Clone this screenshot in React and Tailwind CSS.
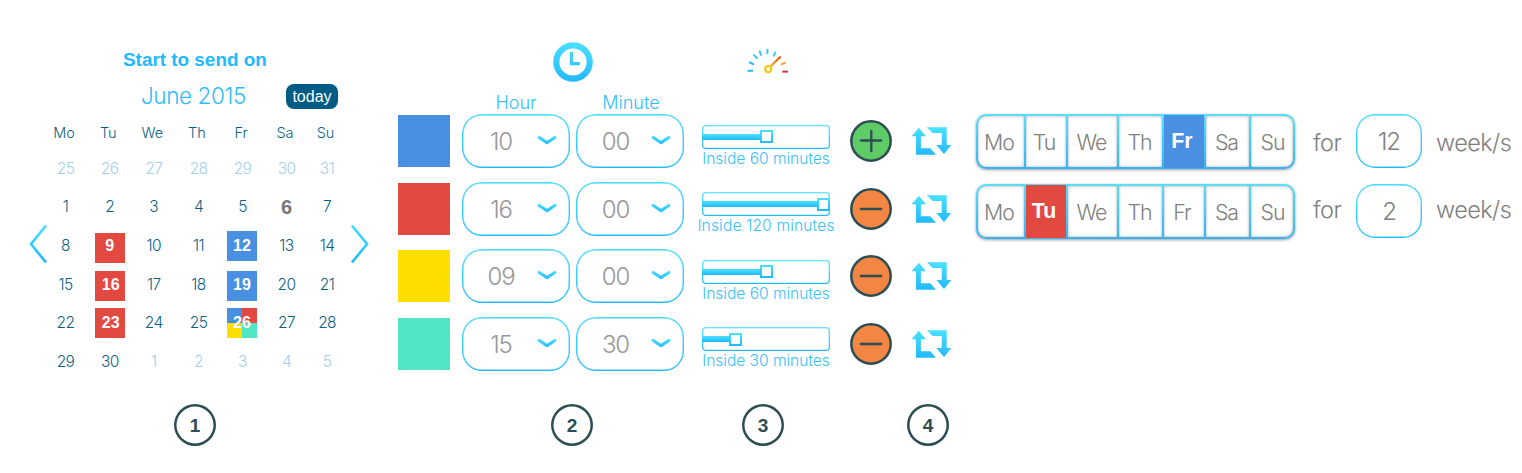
import React from "react";

const light = "font-['Inter','Liberation_Sans',sans-serif] font-light";

const WEEKDAYS = ["Mo", "Tu", "We", "Th", "Fr", "Sa", "Su"];

const DAYS = [
  [25, 26, 27, 28, 29, 30, 31],
  [1, 2, 3, 4, 5, 6, 7],
  [8, 9, 10, 11, 12, 13, 14],
  [15, 16, 17, 18, 19, 20, 21],
  [22, 23, 24, 25, 26, 27, 28],
  [29, 30, 1, 2, 3, 4, 5],
];

const SENDS = [
  { color: "bg-[#4a90e2]", hour: "10", minute: "00", span: 60, knob: "w-[58px]", tracking: "tracking-[-0.003em]" },
  { color: "bg-[#e24a41]", hour: "16", minute: "00", span: 120, knob: "w-[115px]", tracking: "tracking-[0.009em]" },
  { color: "bg-[#fcde00]", hour: "09", minute: "00", span: 60, knob: "w-[58px]", tracking: "tracking-[-0.003em]" },
  { color: "bg-[#50e5c3]", hour: "15", minute: "30", span: 30, knob: "w-[27px]", tracking: "tracking-[-0.003em]" },
];

const REPEATS = [
  { active: "Fr", color: "bg-[#4a90e2]", weeks: "12", lift: "pt-[2px]" },
  { active: "Tu", color: "bg-[#e24a41]", weeks: "2", lift: "pb-[4px]" },
];

const DAY_NUDGES = ["pr-[4px]", "pr-[4px]", "pr-[2px]", "pr-[2px]", "pr-[4px]", "pr-[2px]", "pl-px"];

function Sky({ id, y1, y2 }) {
  return (
    <defs>
      <linearGradient id={id} gradientUnits="userSpaceOnUse" x1="0" x2="0" y1={y1} y2={y2}>
        <stop offset="0" stopColor="#4be1ff" />
        <stop offset="1" stopColor="#22b8ff" />
      </linearGradient>
    </defs>
  );
}

function PageArrow({ id, d }) {
  return (
    <svg className="h-[40px] w-[18px] shrink-0" viewBox="0 0 18 40" fill="none">
      <Sky id={id} y1="0" y2="40" />
      <path d={d} stroke={`url(#${id})`} strokeWidth="2.7" />
    </svg>
  );
}

function Day({ row, day }) {
  const outside = (row === 0 && day > 20) || (row === 5 && day < 10);
  const inMonth = !outside;
  if (inMonth && row === 4 && day === 26) {
    return (
      <div className="relative mr-[1px] grid h-[30px] w-[30px] grid-cols-2 grid-rows-2">
        <div className="bg-[#4a90e2]" />
        <div className="bg-[#e24a41]" />
        <div className="bg-[#fcde00]" />
        <div className="bg-[#50e5c3]" />
        <span className="absolute inset-0 flex items-center justify-center font-['Liberation_Sans',sans-serif] text-[16px] leading-none font-bold text-white">26</span>
      </div>
    );
  }
  if (inMonth && [9, 16, 23, 12, 19].includes(day)) {
    const blue = day === 12 || day === 19;
    const shift = day === 9 ? "mt-[4px] pb-[3px]" : row === 3 ? "mt-[3px] pb-[2px]" : "";
    return (
      <div
        className={`flex h-[30px] w-[30px] items-center justify-center font-['Liberation_Sans',sans-serif] text-[16px] leading-none font-bold text-white ${blue ? "mr-[1px] bg-[#4a90e2]" : "bg-[#e24a41]"} ${day > 9 && !blue ? "pl-[2px]" : ""} ${shift}`}
      >
        {day}
      </div>
    );
  }
  if (inMonth && day === 6) {
    return <span className="pb-px font-['Liberation_Sans',sans-serif] text-[20px] leading-none font-bold text-[#777777]">6</span>;
  }
  return (
    <span className={`${light} text-[15.5px] leading-none tracking-[-0.04em] ${outside ? "text-[#a3cfef]" : "text-[#0a5f86]"}`}>{day}</span>
  );
}

function Calendar() {
  const cols = "grid grid-cols-[44px_44.5px_43.5px_46px_42px_46px_35px]";
  return (
    <section className="flex w-[398px] shrink-0 pl-[29px]">
      <div className="pt-[224px]">
        <PageArrow id="prev" d="M17 1.5 L2 20 L17 38.5" />
      </div>
      <div className="w-[301px] shrink-0 pt-[48px]">
        <h1 className="ml-[76px] h-[24px] font-['Liberation_Sans',sans-serif] text-[18.9px] leading-[24px] font-bold whitespace-nowrap text-[#22b9ff]">
          Start to send on
        </h1>
        <div className="flex h-[49px] items-center">
          <h2 className={`${light} ml-[94px] w-[145px] text-[22.5px] leading-none tracking-[-0.018em] whitespace-nowrap text-[#2fbcfb]`}>June 2015</h2>
          <button className="h-[25px] w-[52px] rounded-[8px] bg-[#005c84] font-['Liberation_Sans',sans-serif] text-[16px] leading-[23px] text-white">today</button>
        </div>
        <div className={`${cols} ml-[-5px] h-[28px]`}>
          {WEEKDAYS.map((d) => (
            <div key={d} className={`${light} text-center text-[14.5px] leading-[24px] text-[#0a5f86]`}>
              {d}
            </div>
          ))}
        </div>
        {DAYS.map((week, row) => (
          <div key={row} className={`${cols} ml-[-3.5px] h-[38.7px]`}>
            {week.map((day) => (
              <div key={day} className="flex items-center justify-center">
                <Day row={row} day={day} />
              </div>
            ))}
          </div>
        ))}
      </div>
      <div className="pt-[224px] pl-[3px]">
        <PageArrow id="next" d="M1 1.5 L16 20 L1 38.5" />
      </div>
    </section>
  );
}

function Select({ id, value }) {
  return (
    <div className="h-[54px] w-[108px] rounded-[20px] bg-linear-to-b from-[#4be1ff] to-[#22b8ff] p-px">
      <div className="flex h-full w-full items-center rounded-[19px] bg-white shadow-[inset_0_0_0_0.4px_#37c8ff]">
        <span className={`${light} w-[76px] pt-[2px] text-center text-[24px] leading-none tracking-[-0.05em] text-[#979797]`}>{value}</span>
        <svg className="mb-[2px] ml-[-2px] h-[10px] w-[20px]" viewBox="0 0 20 10" fill="none">
          <Sky id={id} y1="0" y2="10" />
          <path d="M1.1 1.8 L10 7.6 L18.9 1.8" stroke={`url(#${id})`} strokeWidth="3" />
        </svg>
      </div>
    </div>
  );
}

function Times() {
  return (
    <section className="w-[300px] shrink-0">
      <div className="flex h-[90px] items-end pb-[8px] pl-[155px]">
        <svg className="h-[40px] w-[40px]" viewBox="0 0 40 40" fill="none">
          <Sky id="clock" y1="0" y2="40" />
          <circle cx="20" cy="20" r="16.7" stroke="url(#clock)" strokeWidth="6.2" />
          <path d="M18.4 10 V21.6 H26.8" stroke="url(#clock)" strokeWidth="3.1" />
        </svg>
      </div>
      <div className={`${light} flex h-[17.3px] text-[18px] leading-[26px] text-[#31bffc]`}>
        <span className="ml-[64px] w-[108px] text-center">Hour</span>
        <span className="ml-[7px] w-[108px] text-center">Minute</span>
      </div>
      {SENDS.map((s, i) => (
        <div key={i} className="flex h-[67.5px] items-center">
          <div className={`h-[52px] w-[52px] ${s.color}`} />
          <div className="ml-[12px]">
            <Select id={`hour${i}`} value={s.hour} />
          </div>
          <div className="ml-[6.4px]">
            <Select id={`minute${i}`} value={s.minute} />
          </div>
        </div>
      ))}
    </section>
  );
}

function Gauge() {
  return (
    <svg className="h-[28px] w-[44px]" viewBox="0 0 44 28" fill="none" strokeWidth="2">
      <defs>
        <linearGradient id="needle" gradientUnits="userSpaceOnUse" x1="20" y1="22" x2="35" y2="8">
          <stop offset="0" stopColor="#fbd000" />
          <stop offset="1" stopColor="#e8481f" />
        </linearGradient>
      </defs>
      <path d="M1.5 23.8 H7" stroke="#28c0f5" />
      <path d="M3 15.2 L8 17.5" stroke="#28c0f5" />
      <path d="M7.5 7.6 L11.5 11.4" stroke="#35c5f7" />
      <path d="M13.3 3.6 L15.4 8.6" stroke="#35c5f7" />
      <path d="M21.4 1.8 V7.2" stroke="#3acbfa" />
      <path d="M29.6 4.6 L27.5 9.4" stroke="#3acbfa" />
      <path d="M34.8 17.7 L39.7 15.5" stroke="#f5a13a" />
      <path d="M36.3 24.6 H42" stroke="#cb3a50" />
      <path d="M24.5 19.6 L34.6 9.6" stroke="url(#needle)" strokeWidth="2.1" />
      <circle cx="22.2" cy="22.1" r="3.1" stroke="#fbc404" strokeWidth="2.1" />
    </svg>
  );
}

function Windows() {
  return (
    <section className="w-[136px] shrink-0">
      <div className="flex h-[107.3px] pt-[47px] pl-[48px]">
        <Gauge />
      </div>
      {SENDS.map((s, i) => (
        <div key={i} className="flex h-[67.5px] flex-col items-center pt-[17.5px]">
          <div className="h-[24px] w-[128px] rounded-[4px] bg-linear-to-b from-[#6be6ff] to-[#22b8ff] p-px">
            <div className="flex h-full w-full items-center rounded-[3px] bg-white shadow-[inset_0_0_0_0.3px_#37c8ff]">
              <div className={`-ml-px h-[6.4px] shrink-0 bg-linear-to-b from-[#4be1ff] to-[#22b8ff] ${s.knob}`} />
              <div className="h-[13px] w-[13px] shrink-0 bg-linear-to-b from-[#4be1ff] to-[#22b8ff] p-[2px]">
                <div className="h-full w-full bg-white" />
              </div>
            </div>
          </div>
          <span className={`${light} mt-px text-[15.6px] leading-[17px] whitespace-nowrap text-[#38c1fb] ${s.tracking}`}>Inside {s.span} minutes</span>
        </div>
      ))}
    </section>
  );
}

function Actions() {
  return (
    <section className="w-[142px] shrink-0 pt-[107.3px] pl-[16px]">
      {SENDS.map((s, i) => (
        <div key={i} className="flex h-[67.5px] items-center">
          <svg className="h-[42px] w-[42px]" viewBox="0 0 42 42">
            <circle cx="21" cy="21" r="19.7" fill={i === 0 ? "#5fcb66" : "#f28642"} stroke="#2d4d55" strokeWidth="2.5" />
            <path d={i === 0 ? "M11 20.5 H31 M21.3 11 V31" : "M10.8 21 H31.2"} stroke="#2d4d55" strokeWidth="2.3" strokeLinecap="round" />
          </svg>
          <svg className="ml-[19px] h-[28px] w-[41px]" viewBox="0 0 41 28">
            <Sky id={`loop${i}`} y1="0" y2="28" />
            <g fill={`url(#loop${i})`}>
              <path d="M7.8 .8 L15 9.3 H9.9 V21.3 H19.3 L25 27.8 H4.9 V9.3 H.7 Z" />
              <path d="M15.7 .3 H35.7 V18 H40.3 L33 27 L25.3 18 H30.7 V6 H21.7 Z" />
            </g>
          </svg>
        </div>
      ))}
    </section>
  );
}

function Repeats() {
  return (
    <section className="flex shrink-0 flex-col gap-[15px] pt-[114px]">
      {REPEATS.map((r) => (
        <div key={r.active} className={`${light} flex h-[55px] items-center text-[#808080]`}>
          <div className="h-[55px] w-[319px] rounded-[10px] bg-linear-to-b from-[#58dffa] to-[#35b4f6] p-[2px] shadow-[0_1px_3px_rgba(0,0,0,0.4)]">
            <div className="grid h-full w-full grid-cols-[46px_40px_49px_43px_40px_43px_42px] gap-[2px]">
              {WEEKDAYS.map((d, i) => (
                <div
                  key={d}
                  className={`flex items-center justify-center text-[21.3px] leading-none ${DAY_NUDGES[i]} ${i === 0 ? "rounded-l-[8px]" : ""} ${i === 6 ? "rounded-r-[8px]" : ""} ${
                    d === r.active
                      ? `${r.color} -my-px pt-px font-['Liberation_Sans',sans-serif] font-bold text-white`
                      : "bg-white pt-[2px] tracking-[-0.045em] shadow-[inset_0_0_3px_rgba(0,0,0,0.35)]"
                  }`}
                >
                  {d}
                </div>
              ))}
            </div>
          </div>
          <span className={`ml-[18px] w-[43px] text-[23.5px] leading-none tracking-[-0.02em] ${r.lift}`}>for</span>
          <div className="mb-px h-[54px] w-[66px] rounded-[19px] bg-linear-to-b from-[#4be1ff] to-[#22b8ff] p-px">
            <div className="flex h-full w-full items-center justify-center rounded-[18px] bg-white pt-[2px] text-[24px] leading-none tracking-[-0.05em] shadow-[inset_0_0_0_0.4px_#37c8ff]">
              {r.weeks}
            </div>
          </div>
          <span className={`ml-[14px] text-[23.5px] leading-none tracking-[-0.025em] ${r.lift}`}>week/s</span>
        </div>
      ))}
    </section>
  );
}

export default function App() {
  return (
    <main className="flex h-[473px] w-[1522px] flex-col overflow-hidden bg-white">
      <div className="flex h-[404px] shrink-0">
        <Calendar />
        <Times />
        <Windows />
        <Actions />
        <Repeats />
      </div>
      <footer className="flex pl-[174px] font-['Liberation_Sans',sans-serif] text-[19px] leading-none font-bold text-[#2d4d55]">
        {["mr-[335px]", "mr-[149px]", "mr-[123px]", ""].map((gap, i) => (
          <div key={i} className={`flex h-[42px] w-[42px] items-center justify-center rounded-full pt-px shadow-[inset_0_0_0_2.5px_#2d4d55] ${gap}`}>
            {i + 1}
          </div>
        ))}
      </footer>
    </main>
  );
}
